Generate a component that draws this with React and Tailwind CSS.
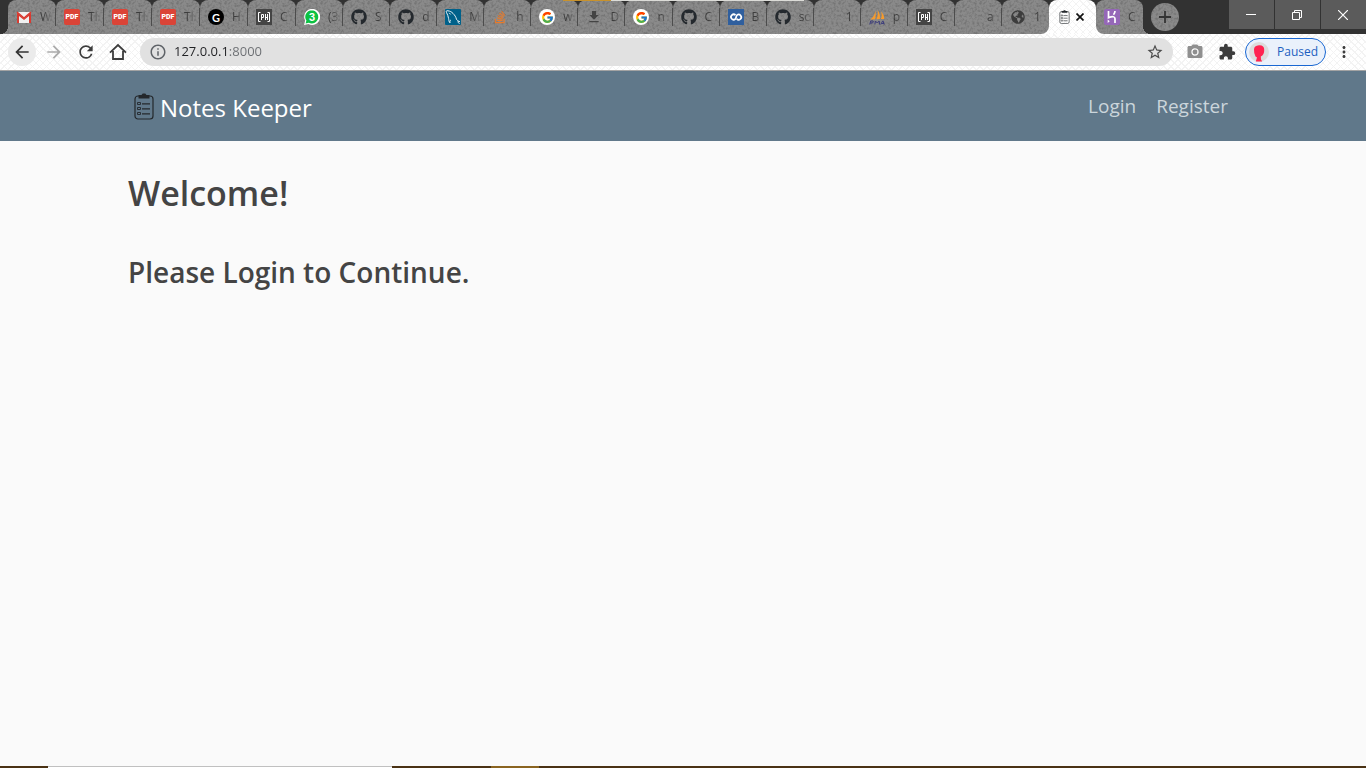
import React from "react";
import {
  MdArrowBack,
  MdArrowForward,
  MdRefresh,
  MdInfoOutline,
  MdStarBorder,
  MdPhotoCamera,
  MdExtension,
  MdMoreVert,
  MdFileDownload,
} from "react-icons/md";
import { FaGithub, FaStackOverflow, FaGlobeAmericas } from "react-icons/fa";
import { FcGoogle } from "react-icons/fc";

function Gmail() {
  return (
    <svg viewBox="0 0 16 16" className="size-4">
      <path d="M1 3h14v11H1z" fill="#f1f1f1" />
      <path d="M1 14V3.500l7 6 7-6V14h-2V7l-5 4-5-4v7z" fill="#d93a30" />
      <path d="M1 3l7 6 7-6" fill="none" stroke="#d93a30" strokeWidth="1.500" />
    </svg>
  );
}

function Pdf() {
  return (
    <span className="flex size-4 items-center justify-center rounded-[2px] bg-[#db4437] font-['Roboto',sans-serif] text-[7px] leading-none font-black text-white">
      PDF
    </span>
  );
}

function GDisc() {
  return (
    <span className="flex size-4 items-center justify-center rounded-full bg-black font-['Lato',sans-serif] text-[11px] leading-none font-bold text-white">
      G
    </span>
  );
}

function Ph() {
  return (
    <svg viewBox="0 0 16 16" className="size-4" fill="none" stroke="#fff">
      <path d="M0 0h16v16H0z" fill="#444" stroke="none" />
      <path d="M4.500 3.500h-2v9h2M11.500 3.500h2v9h-2M5.500 11V5.500h2v3h-2M9.500 5v6M11.500 5v6M9.500 8.500h2" />
    </svg>
  );
}

function WhatsApp() {
  return (
    <span className="relative flex size-4 items-center justify-center font-['Inter',sans-serif] text-[10px] leading-none font-bold text-white">
      <svg viewBox="0 0 16 16" className="absolute inset-0 size-4">
        <path d="M0 16l1.200-4.200A8 8 0 1 1 4.500 15z" fill="#fff" />
        <path d="M1.600 14.400l.8-2.800A6.500 6.500 0 1 1 4.800 13.700z" fill="#0cc143" />
      </svg>
      <span className="relative">3</span>
    </span>
  );
}

function MySql() {
  return (
    <svg viewBox="0 0 16 16" className="size-4" fill="none" stroke="#fff" strokeLinecap="round" strokeLinejoin="round">
      <rect width="16" height="16" rx="1" fill="#00618a" stroke="none" />
      <path
        strokeWidth=".9"
        d="M4.800 13.500C3.500 12.500 4 11 3.600 9.500 3.200 7.500 2.600 5.500 1.500 3.500.8 2 1.500 1.400 3 1.800c2 .3 3.500 1 5 2.600 1.800 1.800 2.900 3.600 3.400 5.600.3 1.200 1.400 1.700 3.300 2.600-1 .1-1.600.1-2 .3.500.5 1.100.9 1.600 1.600M4.800 13.500c-.1-1.300.3-2 .9-2.500M4.500 4.200l.8.900"
      />
    </svg>
  );
}

function Codeigniter() {
  return (
    <svg viewBox="0 0 16 16" className="size-4" fill="none" stroke="#fff" strokeWidth="1.700">
      <path d="M0 0h16v16H0z" fill="#2f5f9e" stroke="none" />
      <path d="M7.500 6.200A2.600 2.600 0 1 0 7.300 10C8.400 9 8 7 9 6.100a2.600 2.600 0 1 1-.3 3.800" />
    </svg>
  );
}

function PhpMyAdmin() {
  return (
    <svg viewBox="0 0 16 16" className="size-4">
      <path
        d="M6.300 2C6 5 4.500 8 1.500 10.500l4.600-.3C6.900 7 7 4.500 6.300 2zM8.500 1c.8 3 .3 6.300-1.200 9.200l3.600-.1C11.300 6.500 10.500 3.500 8.500 1zM12 2.500c.9 2.500.9 5-.2 7.600l3.500-.2C15.200 7 14 4.500 12 2.500z"
        fill="#f79b2c"
      />
      <path
        d="M.8 15.500l.8-3.500h2q1 0 .7 1T3 14H1.500M5.800 15.500l.7-3.500 1.700 2 2-2 .4 3.500M11.800 15.500l1.800-3.500h.5l1 3.500M12.500 14.500h2.500"
        fill="none"
        stroke="#3f3f7d"
      />
    </svg>
  );
}

function Clipboard({ className }) {
  return (
    <svg viewBox="0 0 20 27" className={className} fill="none" stroke="#24282c" strokeWidth="1.200">
      <rect x="1" y="3" width="18" height="23" rx="3" />
      <path d="M4.500 2h3l1.200-1.500h2.600L12.500 2h3v3.500h-11z" fill="#24282c" stroke="none" />
      <path d="M3.500 9.500h3v2h-3zM3.500 14.500h3v2h-3zM3.500 19.500h3v2h-3z" strokeWidth=".9" />
      <path d="M8 10.800h8M8 15.800h8M8 20.800h8" />
    </svg>
  );
}

function Heroku() {
  return (
    <svg viewBox="0 0 16 16" className="size-4" fill="none" stroke="#fff" strokeWidth="1.700">
      <rect width="16" height="16" rx="2" fill="#9567b8" stroke="none" />
      <path d="M4.500 2v6.800q6.500-2.600 6.500 1V14M11 2q0 2-1.500 3.700" />
      <path d="M3.700 10.500v3.600l2-1.800z" fill="#fff" stroke="none" />
    </svg>
  );
}

const github = <FaGithub className="size-4 text-[#24292e]" />;
const google = (
  <span className="flex size-4 items-center justify-center rounded-full bg-white">
    <FcGoogle className="size-[13px]" />
  </span>
);

const tabs = [
  { title: "W", icon: <Gmail />, wide: true },
  { title: "TI", icon: <Pdf />, wide: true },
  { title: "TI", icon: <Pdf />, wide: true },
  { title: "TI", icon: <Pdf />, wide: true },
  { title: "H", icon: <GDisc />, wide: true },
  { title: "C", icon: <Ph />, wide: true },
  { title: "(3", icon: <WhatsApp /> },
  { title: "S", icon: github },
  { title: "d", icon: github },
  { title: "M", icon: <MySql /> },
  { title: "h", icon: <FaStackOverflow className="size-[14px] text-[#e87a2a]" /> },
  { title: "w", icon: google },
  { title: "D", icon: <MdFileDownload className="size-4 text-[#444]" /> },
  { title: "n", icon: google },
  { title: "C", icon: github },
  { title: "B", icon: <Codeigniter /> },
  { title: "sc", icon: github },
  { title: "1", icon: null },
  { title: "p", icon: <PhpMyAdmin /> },
  { title: "C", icon: <Ph /> },
  { title: "a", icon: null },
  { title: "1", icon: <FaGlobeAmericas className="size-[14px] text-[#3c3c3c]" />, beforeActive: true },
  { active: true },
  { title: "C", icon: <Heroku />, afterActive: true },
];

const HATCH =
  "bg-white bg-[repeating-linear-gradient(45deg,#f3f3f3_0_1px,transparent_1px_5px),repeating-linear-gradient(-45deg,#f3f3f3_0_1px,transparent_1px_5px)]";

function GrainFilter() {
  return (
    <svg className="absolute size-0" aria-hidden="true">
      <filter id="grain" x="0" y="0" width="100%" height="100%">
        <feTurbulence type="fractalNoise" baseFrequency=".4" numOctaves="2" />
        <feColorMatrix values="0 0 0 0 0  0 0 0 0 0  0 0 0 0 0  3 0 0 0 -1.300" />
      </filter>
    </svg>
  );
}

function Grain() {
  return (
    <svg className="pointer-events-none absolute inset-0 h-full w-full opacity-15" aria-hidden="true">
      <rect width="100%" height="100%" filter="url(#grain)" />
    </svg>
  );
}

function Tab({ tab }) {
  if (tab.active) {
    return (
      <div className="min-w-0 flex-1 bg-[#323232]">
        <div className={`flex h-full items-center rounded-t-lg pl-[7px] ${HATCH}`}>
          <span className="flex size-4 items-center justify-center">
            <Clipboard className="h-[14px] w-[11px]" />
          </span>
          <button aria-label="Close tab" className="flex size-4 items-center justify-center">
            <svg viewBox="0 0 8 8" className="size-2" stroke="#111" strokeWidth="1.700">
              <path d="M.5.5l7 7M7.500.5l-7 7" />
            </svg>
          </button>
        </div>
      </div>
    );
  }
  const size = tab.wide ? "w-12 shrink-0" : "min-w-0 flex-1";
  const foot = tab.beforeActive ? "rounded-br-lg" : tab.afterActive ? "rounded-bl-lg" : "";
  const under = tab.beforeActive || tab.afterActive ? "bg-[linear-gradient(#323232_50%,#fff_50%)]" : "bg-[#323232]";
  const line = tab.beforeActive || tab.afterActive ? "bg-transparent" : "bg-[#4c4c4c]";
  return (
    <div className={`${size} ${under}`}>
      <button
        className={`relative flex h-full w-full items-center overflow-hidden rounded-t-lg bg-[#8a8a8a] pl-2 ${foot}`}
      >
        <Grain />
        <span className="relative flex size-4 shrink-0 items-center justify-center">{tab.icon}</span>
        <span className="relative ml-2 w-[11px] shrink-0 overflow-hidden bg-[linear-gradient(90deg,#3c3c3c_30%,#777)] bg-clip-text text-left text-xs whitespace-nowrap text-transparent">
          {tab.title}
        </span>
        <span className={`relative ml-auto h-[18px] w-px ${line}`} />
      </button>
    </div>
  );
}

function TabStrip() {
  return (
    <div className="relative flex h-[34px] bg-[#323232]">
      <GrainFilter />
      <div className="w-2 shrink-0 bg-[radial-gradient(circle_at_0_26px,#323232_8px,#858585_8px)] [clip-path:inset(26px_0_0_0)]" />
      <div className="flex min-w-0 flex-1">
        {tabs.map((tab, i) => (
          <Tab key={i} tab={tab} />
        ))}
      </div>
      <div className="w-2 shrink-0 bg-[radial-gradient(circle_at_100%_26px,#323232_8px,#858585_8px)] [clip-path:inset(26px_0_0_0)]" />
      <button
        aria-label="New tab"
        className="relative mt-[3px] mr-[50px] flex size-7 shrink-0 items-center justify-center overflow-hidden rounded-full bg-[#8a8a8a]"
      >
        <Grain />
        <svg viewBox="0 0 12 12" className="relative size-3" stroke="#333" strokeWidth="1.800">
          <path d="M6 0v12M0 6h12" />
        </svg>
      </button>
      <div className="flex h-[29px] shrink-0 gap-px">
        <button aria-label="Minimize" className="flex w-[45px] items-center justify-center bg-[#5b5b5b] pr-px">
          <svg viewBox="0 0 10 10" className="size-[10px]" stroke="#fff">
            <path d="M0 4.500h10" />
          </svg>
        </button>
        <button aria-label="Restore" className="flex w-[45px] items-center justify-center bg-[#5b5b5b] pr-px">
          <svg viewBox="0 0 10 10" className="size-[10px]" stroke="#fff" fill="none">
            <path d="M.5 2.500h7v7h-7zM2.500 2.500v-2h7v7h-2" />
          </svg>
        </button>
        <button aria-label="Close" className="flex w-[45px] items-center justify-center bg-[#5b5b5b] pr-px">
          <svg viewBox="0 0 10 10" className="size-[10px]" stroke="#fff" strokeWidth="1.200">
            <path d="M0 0l10 10M10 0L0 10" />
          </svg>
        </button>
      </div>
      <div className="absolute inset-x-0 top-0 flex h-[2px] items-start">
        <span className="w-[41.200%]" />
        <span className="h-px w-12 bg-[#c8922c]" />
        <span className="h-px w-[193px] bg-[#dcdcd8]" />
      </div>
    </div>
  );
}

function Toolbar() {
  return (
    <div className={`flex h-[37px] items-center border-b border-[#a3a3a3] pr-[13px] pl-2 ${HATCH}`}>
      <button aria-label="Back" className="flex size-7 items-center justify-center rounded-full bg-[#ebebeb]">
        <MdArrowBack className="size-5 text-[#333]" />
      </button>
      <button aria-label="Forward" className="ml-1 flex size-7 items-center justify-center">
        <MdArrowForward className="size-5 text-[#aaa]" />
      </button>
      <button aria-label="Reload" className="ml-1 flex size-7 items-center justify-center">
        <MdRefresh className="size-5 text-[#3c3c3c]" />
      </button>
      <button aria-label="Home" className="ml-1 flex size-7 items-center justify-center">
        <svg viewBox="0 0 18 18" className="size-[18px]" fill="none" stroke="#3c3c3c" strokeWidth="1.800">
          <path d="M1 9.700L9 2l8 7.700M4 8v8h10V8" />
        </svg>
      </button>
      <div className="ml-2 flex h-7 min-w-0 flex-1 items-center rounded-full bg-[#e1e1e1] px-[9px]">
        <MdInfoOutline className="size-[18px] shrink-0 text-[#5f6368]" />
        <input
          aria-label="Address"
          defaultValue="127.0.0.1:8000"
          className="ml-[7px] min-w-0 flex-1 bg-[linear-gradient(90deg,#202124_55px,#6b6e72_55px)] bg-clip-text text-[13px] text-transparent outline-none"
        />
        <button aria-label="Bookmark">
          <MdStarBorder className="size-[18px] text-[#4c4c4c]" />
        </button>
      </div>
      <button aria-label="Capture" className="ml-[13px]">
        <MdPhotoCamera className="size-[18px] text-[#8f8f8f]" />
      </button>
      <button aria-label="Extensions" className="ml-[14px]">
        <MdExtension className="size-[18px] text-[#3c3c3c]" />
      </button>
      <button className="ml-[9px] flex h-7 w-[81px] items-center rounded-full border border-[#1967d2] bg-[#eaf1fb] pl-[3px] text-[#1c5fc0]">
        <svg viewBox="0 0 20 20" className="size-5">
          <circle cx="10" cy="10" r="10" fill="#dcdcdc" />
          <path
            d="M5 7.500Q5 3.500 10 3.200q5.300-.2 5.200 4.600.2 5.200-3.400 6.600l.2 3 1.200 2.200-6.400-.2L8 15.600l-1.500-1.200Q4.800 11.500 5 7.500z"
            fill="#ff2350"
          />
        </svg>
        <span className="ml-2 text-xs">Paused</span>
      </button>
      <button aria-label="Menu" className="ml-[9px] w-[18px]">
        <MdMoreVert className="size-[18px] text-[#3c3c3c]" />
      </button>
    </div>
  );
}

export default function App() {
  return (
    <div className="flex min-h-screen flex-col bg-[#fafafa] font-['Open_Sans','Noto_Sans',sans-serif]">
      <header>
        <TabStrip />
        <Toolbar />
      </header>
      <nav className="bg-[#60788a]">
        <div className="mx-auto flex h-[70px] max-w-[1140px] items-center px-[15px]">
          <a href="#home" className="flex items-center gap-[6px] pl-[6px] text-2xl text-white">
            <Clipboard className="h-[27px] w-5" />
            <span className="pt-[3px]">Notes Keeper</span>
          </a>
          <div className="ml-auto flex gap-5 pt-px pr-[10px] text-[19px] text-[#cbd5db]">
            <a href="#login">Login</a>
            <a href="#register">Register</a>
          </div>
        </div>
      </nav>
      <main className="mx-auto w-full max-w-[1140px] flex-1 px-[15px] pt-7 text-[#444]">
        <h1 className="text-[34px] leading-[48px] font-semibold">Welcome!</h1>
        <h2 className="mt-[35px] text-[28px] leading-10 font-semibold">Please Login to Continue.</h2>
      </main>
      <footer className="flex h-[2px] bg-[#4a3214]">
        <span className="ml-12 w-[344px] border-t border-[#c0c0c0] bg-white" />
        <span className="ml-[99px] w-12 bg-[#8a6420]" />
      </footer>
    </div>
  );
}
